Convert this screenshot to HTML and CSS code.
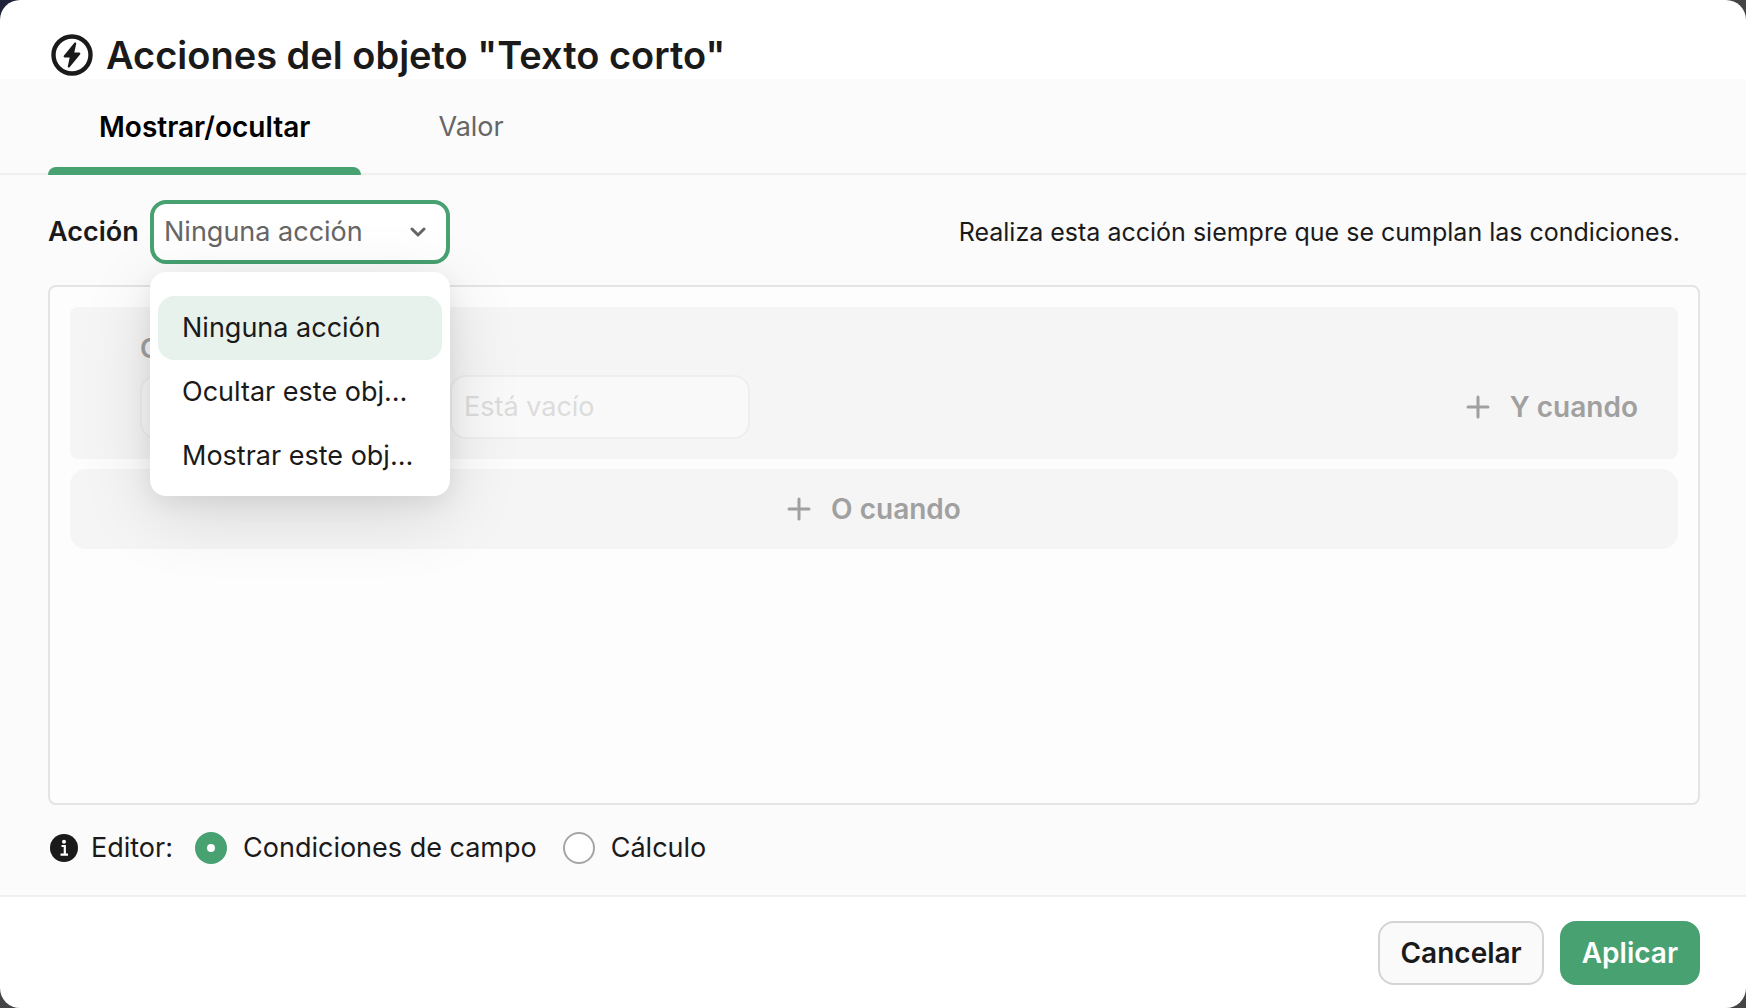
FILE: index.html
```html
<!DOCTYPE html>
<html lang="es">
<head>
<meta charset="utf-8">
<meta name="viewport" content="width=device-width, initial-scale=1">
<title>Acciones del objeto</title>
<link rel="stylesheet" href="styles.css">
</head>
<body>
<main class="dialog" role="dialog" aria-labelledby="dialog-title">
  <header class="dialog-header">
    <svg class="title-icon" viewBox="0 0 42 42" aria-hidden="true">
      <circle cx="21" cy="21" r="18.5" fill="none" stroke="currentColor" stroke-width="4.4"/>
      <path d="M23.400 8.800c.8-.8 2.100-.2 1.800.9l-1.900 8.800h4.800c1.300 0 1.700 1.100.9 2L18.600 33.200c-.8.8-2.100.2-1.800-.9l1.900-8.800h-4.800c-1.300 0-1.700-1.100-.9-2z" fill="currentColor"/>
    </svg>
    <h1 class="dialog-title" id="dialog-title">Acciones del objeto "Texto corto"</h1>
  </header>

  <nav class="tabs" role="tablist">
    <button class="tab tab-active" type="button" role="tab" aria-selected="true">Mostrar/ocultar</button>
    <button class="tab" type="button" role="tab" aria-selected="false">Valor</button>
  </nav>

  <section class="dialog-body">
    <div class="action-row">
      <label class="action-label" for="action">Acción</label>
      <div class="dropdown">
        <select class="select select-open" id="action">
          <option>Ninguna acción</option>
        </select>
        <svg class="chevron" viewBox="0 0 16 10" aria-hidden="true">
          <path d="M2 2l6 6 6-6" fill="none" stroke="currentColor" stroke-width="3" stroke-linecap="round" stroke-linejoin="round"/>
        </svg>
        <ul class="menu" role="listbox">
          <li class="option option-selected" role="option" aria-selected="true">Ninguna acción</li>
          <li class="option" role="option">Ocultar este objeto</li>
          <li class="option" role="option">Mostrar este objeto</li>
        </ul>
      </div>
      <p class="hint">Realiza esta acción siempre que se cumplan las condiciones.</p>
    </div>

    <div class="conditions">
      <div class="condition">
        <label class="condition-label" for="field">Cuando</label>
        <div class="condition-fields">
          <select class="select" id="field" disabled><option></option></select>
          <select class="select" aria-label="Operador" disabled><option>Está vacío</option></select>
          <button class="add add-and" type="button" disabled>
            <svg class="plus" viewBox="0 0 24 24" aria-hidden="true"><path d="M12 2v20M2 12h20" fill="none" stroke="currentColor" stroke-width="3" stroke-linecap="round"/></svg>
            Y cuando
          </button>
        </div>
      </div>
      <button class="add add-or" type="button" disabled>
        <svg class="plus" viewBox="0 0 24 24" aria-hidden="true"><path d="M12 2v20M2 12h20" fill="none" stroke="currentColor" stroke-width="3" stroke-linecap="round"/></svg>
        O cuando
      </button>
    </div>

    <div class="editor-row" role="radiogroup" aria-labelledby="editor-label">
      <svg class="info" viewBox="0 0 28 28" aria-hidden="true">
        <circle cx="14" cy="14" r="14" fill="currentColor"/>
        <circle cx="14" cy="7.700" r="2" fill="#fff"/>
        <path d="M11.500 12h3.300v8.500M10.500 20.700h7.500" fill="none" stroke="#fff" stroke-width="2.200"/>
      </svg>
      <span class="editor-label" id="editor-label">Editor:</span>
      <label class="choice"><input class="radio" type="radio" name="editor" checked>Condiciones de campo</label>
      <label class="choice"><input class="radio" type="radio" name="editor">Cálculo</label>
    </div>
  </section>

  <footer class="dialog-footer">
    <button class="button" type="button">Cancelar</button>
    <button class="button button-primary" type="button">Aplicar</button>
  </footer>
</main>
</body>
</html>
```
FILE: styles.css
```css
* {
  box-sizing: border-box;
}

body {
  margin: 0;
  background: linear-gradient(135deg, #1f2238 20%, #444446 20%);
  color: #1a1a1a;
  font: 400 27px/32px Inter, "Liberation Sans", sans-serif;
}

button,
select,
input {
  font: inherit;
  color: inherit;
}

.dialog {
  display: flex;
  flex-direction: column;
  min-height: 100vh;
  overflow: hidden;
  border-radius: 20px;
  background: #fff;
}

.dialog-header {
  display: flex;
  align-items: center;
  gap: 13px;
  padding: 32px 51px 1px;
}

.title-icon {
  width: 42px;
  height: 42px;
}

.dialog-title {
  margin: 0;
  font-size: 38px;
  font-weight: 600;
  line-height: 46px;
}

.tabs {
  display: flex;
  gap: 26px;
  padding: 0 48px;
  border-bottom: 2px solid #efefef;
  background: #fbfbfb;
}

.tab {
  height: 96px;
  margin-bottom: -2px;
  padding: 0 51px;
  border: 0;
  background: none;
  color: #666;
}

.tab-active {
  position: relative;
  color: #000;
  font-size: 28px;
  font-weight: 600;
}

.tab-active::after {
  content: "";
  position: absolute;
  inset: auto 0 0;
  height: 8px;
  border-radius: 8px 8px 0 0;
  background: #47a171;
}

.dialog-body {
  display: flex;
  flex: 1;
  flex-direction: column;
  padding: 25px 46px 31px 48px;
  border-bottom: 2px solid #efefef;
  background: #fbfbfb;
}

.action-row {
  display: flex;
  align-items: center;
  margin-bottom: 21px;
}

.action-label {
  width: 102px;
  font-weight: 600;
}

.dropdown {
  position: relative;
}

.select {
  appearance: none;
  display: block;
  width: 300px;
  height: 64px;
  padding: 0 12px;
  border: 2px solid #ddd;
  border-radius: 16px;
  background: #fff;
  color: #666;
  opacity: 1;
}

.select:disabled {
  border-color: #eee;
  background: #f9f9f9;
  color: #dcdcdc;
}

.select-open {
  padding: 0 10px;
  border: 4px solid #47a171;
}

.chevron {
  position: absolute;
  top: 27px;
  right: 24px;
  width: 16px;
  height: 10px;
  color: #666;
}

.menu {
  position: absolute;
  top: 72px;
  left: 0;
  z-index: 1;
  width: 300px;
  margin: 0;
  padding: 24px 8px 8px;
  border-radius: 16px;
  background: #fff;
  box-shadow: 0 18px 72px rgba(0, 0, 0, 0.12), 0 6px 24px rgba(0, 0, 0, 0.07);
  list-style: none;
}

.option {
  overflow: hidden;
  padding: 16px 24px;
  border-radius: 16px;
  text-overflow: ellipsis;
  white-space: nowrap;
}

.option-selected {
  background: #e8f2ed;
}

.hint {
  margin: 0 20px 0 auto;
  font-size: 25px;
}

.conditions {
  display: flex;
  flex: 1;
  flex-direction: column;
  gap: 10px;
  padding: 20px;
  border: 2px solid #e4e4e4;
  border-radius: 8px;
  background: #fdfdfd;
}

.condition {
  padding: 26px 40px 20px 70px;
  border-radius: 8px;
  background: #f5f5f5;
}

.condition-label {
  display: block;
  margin-bottom: 10px;
  color: #a0a0a0;
  font-weight: 600;
}

.condition-fields {
  display: flex;
  align-items: center;
  gap: 10px;
}

.add {
  display: flex;
  align-items: center;
  justify-content: center;
  gap: 20px;
  padding: 0;
  border: 0;
  background: none;
  color: #a0a0a0;
  font-size: 28px;
  font-weight: 600;
}

.add-and {
  margin-left: auto;
}

.add-or {
  height: 80px;
  border-radius: 16px;
  background: #f5f5f5;
}

.plus {
  width: 24px;
  height: 24px;
}

.editor-row {
  display: flex;
  align-items: center;
  padding: 27px 2px 0;
}

.info {
  width: 28px;
  height: 28px;
}

.editor-label {
  margin: 0 22px 0 13px;
}

.choice {
  display: flex;
  align-items: center;
  gap: 16px;
  margin-right: 26px;
}

.radio {
  appearance: none;
  width: 32px;
  height: 32px;
  margin: 0;
  border: 2px solid #a6a6a6;
  border-radius: 50%;
  background: #fff;
}

.radio:checked {
  border: 12px solid #47a171;
}

.dialog-footer {
  display: flex;
  justify-content: flex-end;
  gap: 16px;
  padding: 24px 46px 23px;
}

.button {
  height: 64px;
  padding: 0 20px;
  border: 2px solid #d4d4d4;
  border-radius: 16px;
  background: #fafafa;
  font-size: 28px;
  font-weight: 600;
}

.button-primary {
  border-color: #47a171;
  background: #47a171;
  color: #fff;
}
```
